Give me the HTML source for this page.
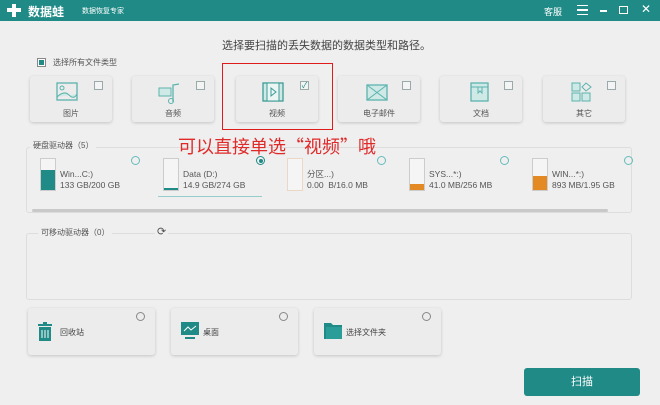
<!DOCTYPE html>
<html><head><meta charset="utf-8"><style>
*{margin:0;padding:0;box-sizing:border-box}
body{width:660px;height:405px;background:#efefef;font-family:"Liberation Sans","Noto Sans CJK SC",sans-serif;position:relative;overflow:hidden;color:#444}
.a{position:absolute}
.tb{left:0;top:0;width:660px;height:21px;background:#1f8a86;color:#fff}
.card{position:absolute;background:#ececec;border-radius:3px;box-shadow:0 1px 3px rgba(0,0,0,.18)}
.tc{top:76px;width:82px;height:46px}
.tc .lb{position:absolute;left:0;right:0;top:32px;text-align:center;font-size:8px;color:#555}
.cb{position:absolute;right:9px;top:5px;width:9px;height:9px;border:1px solid #9aa;background:#f4f4f4}
.grp{position:absolute;border:1px solid #ddd;border-radius:3px}
.gl{position:absolute;font-size:8px;color:#555;background:#efefef;padding:0 3px}
.drv{position:absolute;top:158px;width:120px;height:36px}
.bat{position:absolute;left:0;top:0;width:16px;height:33px;border:1px solid #ccc;background:#f5f5f5}
.bat i{position:absolute;left:0;right:0;bottom:0;display:block}
.dn{position:absolute;left:20px;top:11px;font-size:8.5px;color:#555;line-height:11px}
.rd{position:absolute;width:9px;height:9px;border:1px solid #6bb;border-radius:50%}
.bc{top:308px;width:127px;height:47px}
.bc .t{position:absolute;left:32px;top:19px;font-size:8px;color:#444}
</style></head><body>
<div class="a tb">
 <div class="a" style="left:7px;top:4px;width:14px;height:13px"><div class="a" style="left:5px;top:0;width:4px;height:13px;background:#fff"></div><div class="a" style="left:0;top:4px;width:14px;height:4px;background:#fff"></div></div>
 <div class="a" style="left:28px;top:3px;font-size:12px;font-weight:bold">数据蛙</div>
 <div class="a" style="left:82px;top:6px;font-size:7px">数据恢复专家</div>
 <div class="a" style="left:544px;top:5px;font-size:9px">客服</div>
 <div class="a" style="left:577px;top:5px;width:11px;height:10px;border-top:1.5px solid #fff;border-bottom:1.5px solid #fff"></div>
 <div class="a" style="left:577px;top:9px;width:11px;height:1.5px;background:#fff"></div>
 <div class="a" style="left:600px;top:10px;width:7px;height:1.5px;background:#fff"></div>
 <div class="a" style="left:619px;top:6px;width:9px;height:8px;border:1.5px solid #fff"></div>
 <div class="a" style="left:641px;top:2px;font-size:12px">✕</div>
</div>
<div class="a" style="left:222px;top:37px;font-size:11px;color:#444">选择要扫描的丢失数据的数据类型和路径。</div>
<div class="a" style="left:37px;top:58px;width:9px;height:9px;border:1px solid #888;background:#fff"><div class="a" style="left:1px;top:1px;width:5px;height:5px;background:#1f8a86"></div></div>
<div class="a" style="left:53px;top:57px;font-size:8px;color:#555">选择所有文件类型</div>

<div class="card tc" style="left:30px"><svg class="a" style="left:26px;top:6px" width="22" height="20"><rect x="1" y="1" width="20" height="17" fill="none" stroke="#5bb3ad" stroke-width="1.3"/><circle cx="6" cy="6" r="2" fill="none" stroke="#5bb3ad"/><path d="M1 15 Q8 8 13 13 T21 12" fill="#cfe9e6" stroke="#5bb3ad"/></svg><div class="lb">图片</div><div class="cb"></div></div>
<div class="card tc" style="left:132px"><svg class="a" style="left:26px;top:6px" width="24" height="22"><rect x="1" y="6" width="12" height="8" fill="#cfe9e6" stroke="#5bb3ad"/><path d="M15 20 V3 L21 2" fill="none" stroke="#5bb3ad" stroke-width="1.3"/><circle cx="13" cy="19" r="2.5" fill="none" stroke="#5bb3ad"/></svg><div class="lb">音频</div><div class="cb"></div></div>
<div class="card tc" style="left:236px"><svg class="a" style="left:26px;top:6px" width="22" height="20"><rect x="1" y="1" width="20" height="18" fill="#cfe9e6" stroke="#3c9b95" stroke-width="1.3"/><rect x="5" y="1" width="12" height="18" fill="#eaf5f4" stroke="#3c9b95"/><path d="M9 6 L14 10 L9 14Z" fill="none" stroke="#3c9b95"/></svg><div class="lb">视频</div><div class="cb" style="font-size:8px;line-height:7px;color:#1f8a86;text-align:center">✓</div></div>
<div class="card tc" style="left:338px"><svg class="a" style="left:28px;top:6px" width="22" height="20"><rect x="1" y="3" width="20" height="15" fill="#cfe9e6" stroke="#5bb3ad" stroke-width="1.3"/><path d="M1 3 L21 18 M21 3 L1 18" stroke="#5bb3ad"/></svg><div class="lb">电子邮件</div><div class="cb"></div></div>
<div class="card tc" style="left:440px"><svg class="a" style="left:30px;top:6px" width="20" height="20"><rect x="1" y="1" width="17" height="18" fill="#cfe9e6" stroke="#5bb3ad" stroke-width="1.3"/><path d="M1 5 H18 M8 5 V11 L10 9 L12 11 V5" fill="none" stroke="#5bb3ad"/></svg><div class="lb">文档</div><div class="cb"></div></div>
<div class="card tc" style="left:543px"><svg class="a" style="left:28px;top:6px" width="22" height="22"><rect x="1" y="1" width="8" height="8" fill="#cfe9e6" stroke="#5bb3ad"/><path d="M15 1 L20 5 L15 9 L11 5Z" fill="none" stroke="#5bb3ad"/><rect x="1" y="11" width="8" height="8" fill="#cfe9e6" stroke="#5bb3ad"/><rect x="11" y="11" width="8" height="8" fill="#cfe9e6" stroke="#5bb3ad"/></svg><div class="lb">其它</div><div class="cb"></div></div>
<div class="a" style="left:222px;top:63px;width:111px;height:67px;border:1.5px solid #e01b1b"></div>

<div class="grp" style="left:26px;top:147px;width:606px;height:66px"></div>
<div class="gl" style="left:30px;top:140px">硬盘驱动器（5）</div>
<div class="a" style="left:178px;top:133px;font-size:18px;color:#e02a2a;font-family:'Noto Sans CJK SC',sans-serif">可以直接单选“视频”哦</div>
<div class="drv" style="left:40px"><div class="bat"><i style="height:20px;background:#1f8a86"></i></div><div class="dn">Win...C:)<br>133 GB/200 GB</div></div>
<div class="rd" style="left:131px;top:156px"></div>
<div class="drv" style="left:163px"><div class="bat"><i style="height:2px;background:#1f8a86"></i></div><div class="dn">Data (D:)<br>14.9 GB/274 GB</div></div>
<div class="a" style="left:158px;top:196px;width:104px;height:1px;background:#9cc"></div>
<div class="rd" style="left:256px;top:156px;border-color:#1f8a86"><div class="a" style="left:1.5px;top:1.5px;width:4px;height:4px;border-radius:50%;background:#1f8a86"></div></div>
<div class="drv" style="left:287px"><div class="bat" style="border-color:#ead7c4"></div><div class="dn">分区...)<br>0.00 &nbsp;B/16.0 MB</div></div>
<div class="rd" style="left:377px;top:156px"></div>
<div class="drv" style="left:409px"><div class="bat"><i style="height:6px;background:#e38a24"></i></div><div class="dn">SYS...*:)<br>41.0 MB/256 MB</div></div>
<div class="rd" style="left:500px;top:156px"></div>
<div class="drv" style="left:532px"><div class="bat"><i style="height:14px;background:#e38a24"></i></div><div class="dn">WIN...*:)<br>893 MB/1.95 GB</div></div>
<div class="rd" style="left:624px;top:156px"></div>
<div class="a" style="left:32px;top:209px;width:576px;height:3px;background:#c9c9c9;border-radius:2px"></div>

<div class="grp" style="left:26px;top:233px;width:606px;height:67px"></div>
<div class="gl" style="left:38px;top:227px">可移动驱动器（0）</div>
<div class="a" style="left:155px;top:225px;font-size:11px;color:#555;background:#efefef;padding:0 2px">⟳</div>

<div class="card bc" style="left:28px"><svg class="a" style="left:10px;top:14px" width="14" height="20"><rect x="1" y="5" width="12" height="14" fill="#1f8a86"/><rect x="0" y="2" width="14" height="2" fill="#1f8a86"/><rect x="5" y="0" width="4" height="2" fill="#1f8a86"/><path d="M4 8 V16 M7 8 V16 M10 8 V16" stroke="#fff"/></svg><div class="t">回收站</div><div class="rd" style="left:108px;top:4px;border-color:#888"></div></div>
<div class="card bc" style="left:171px"><svg class="a" style="left:10px;top:14px" width="18" height="18"><rect x="0" y="0" width="18" height="13" fill="#1f8a86"/><path d="M3 9 L7 5 L10 8 L15 4" stroke="#fff" fill="none"/><rect x="4" y="15" width="10" height="2" fill="#1f8a86"/></svg><div class="t">桌面</div><div class="rd" style="left:108px;top:4px;border-color:#888"></div></div>
<div class="card bc" style="left:314px"><svg class="a" style="left:10px;top:14px" width="18" height="18"><path d="M0 1 H7 L9 3 H18 V17 H0Z" fill="#1f8a86"/><rect x="2" y="5" width="16" height="12" fill="#2a9d98"/></svg><div class="t">选择文件夹</div><div class="rd" style="left:108px;top:4px;border-color:#888"></div></div>

<div class="a" style="left:524px;top:368px;width:116px;height:28px;background:#1f8a86;border-radius:3px;color:#fff;font-size:11px;text-align:center;line-height:28px">扫描</div>
</body></html>
